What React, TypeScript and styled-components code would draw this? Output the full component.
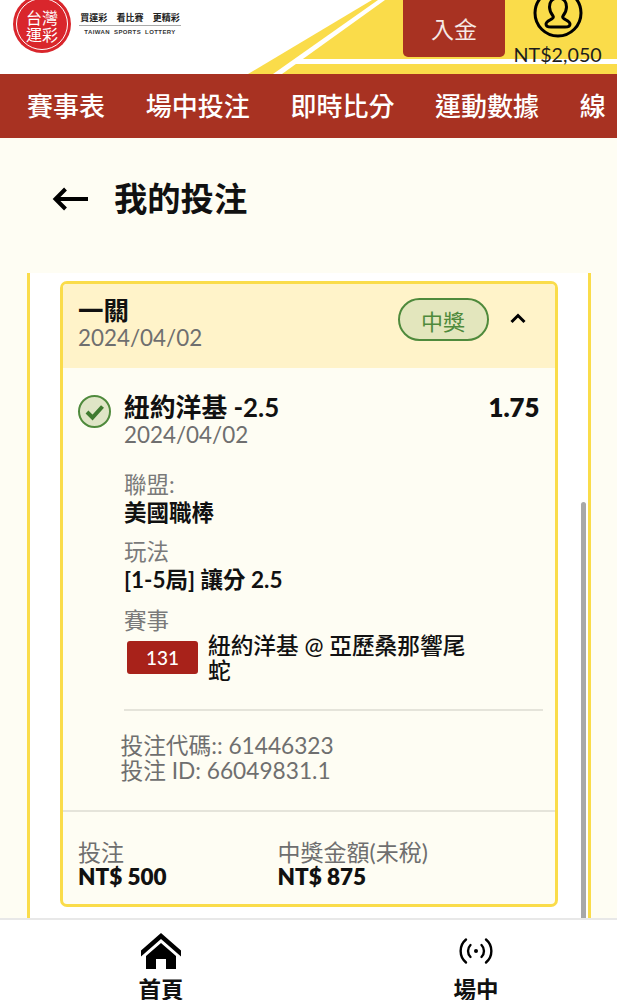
import React from "react";
import styled, { createGlobalStyle } from "styled-components";

const Global = createGlobalStyle`
  html, body { margin: 0; padding: 0; background: #fefdf3; }
  * { box-sizing: border-box; }
`;
const CJK = `Lato, "Noto Sans CJK TC", sans-serif`;

const Page = styled.div`
  width: 617px; height: 1000px; overflow: hidden; display: flex; flex-direction: column;
  background: #fefdf3; font-family: ${CJK}; color: #000;
`;
const Header = styled.header`
  position: relative; height: 74px; flex: none; background: #fff; display: flex; overflow: hidden;
`;
const HeaderArt = styled.svg`
  position: absolute; inset: 0; width: 617px; height: 74px;
`;
const Logo = styled.div`
  position: relative; margin: -5px 0 0 13px; width: 58px; height: 58px; border-radius: 50%; background: #d9262c;
  display: flex; align-items: center; justify-content: center; flex: none;
  &::after { content: ""; position: absolute; inset: 3px; border: 1px solid #fff; border-radius: 50%; }
`;
const LogoText = styled.div`
  color: #fff; font-size: 16px; line-height: 17px; width: 34px; text-align: center; margin-top: 4px;
`;
const Slogan = styled.div`
  margin: 12px 0 0 8px; width: 102px; display: flex; flex-direction: column; align-items: center;
`;
const SloganTop = styled.div`
  font-size: 9px; line-height: 11px; font-weight: 700; white-space: nowrap; color: #222; word-spacing: 7px; padding-bottom: 2px;
  border-bottom: 1px solid #aaa; width: 100%; text-align: center;
`;
const SloganBottom = styled.div`
  font-family: "Liberation Sans", sans-serif; font-size: 6px; line-height: 11px; margin-top: 1px; font-weight: 700; color: #333; letter-spacing: .4px; word-spacing: 2px; white-space: nowrap;
`;
const Deposit = styled.div`
  position: absolute; left: 403px; top: -4px; width: 102px; height: 61px; border-radius: 5px; background: #a83222;
  color: #f5e9e6; font-size: 23px; display: flex; align-items: center; justify-content: center; padding-top: 3px;
`;
const Account = styled.div`
  position: absolute; left: 505px; top: 0; width: 112px; height: 74px; display: flex; flex-direction: column; align-items: flex-start; padding-left: 28px;
`;
const Balance = styled.div`
  position: absolute; top: 43px; left: 8.500px; font-size: 19.700px; line-height: 23px; color: #1c1c1c; white-space: nowrap;
`;
const Nav = styled.nav`
  height: 64px; flex: none; background: #a83222; display: flex; align-items: center; padding-left: 27px; gap: 40.700px; overflow: hidden; white-space: nowrap;
`;
const NavItem = styled.div`
  color: #fff; font-size: 26px; font-weight: 500; line-height: 32px; flex: none;
`;
const TitleRow = styled.div`
  height: 135px; flex: none; display: flex; align-items: center; padding: 0 0 15px 52px; gap: 26px;
`;
const BackArrow = styled.svg`
  width: 36px; height: 26px; margin-top: 2px; flex: none;
`;
const Title = styled.h1`
  margin: 0; font-size: 33.300px; line-height: 40px; font-weight: 700; color: #111;
`;
const Panel = styled.section`
  position: relative; flex: 1; min-height: 0; margin: 0 26px 0 27px; background: #fff;
  border-left: 3px solid #fadc4a; border-right: 3px solid #fadc4a; padding: 8px 0 0 29.5px; overflow: hidden;
`;
const ScrollThumb = styled.div`
  position: absolute; right: 2.500px; top: 229px; bottom: 0; width: 4.500px; background: #a8a8a8; border-radius: 3px 3px 0 0;
`;
const Card = styled.article`
  width: 498px; height: 626px; border: 3px solid #fadc4a; border-radius: 7px; background: #fefdf3; display: flex; flex-direction: column; overflow: hidden;
`;
const CardHead = styled.div`
  height: 84px; flex: none; background: #fff3c9; display: flex; align-items: center; padding: 0 0 4px 15.500px;
`;
const HeadText = styled.div`
  flex: 1; display: flex; flex-direction: column;
`;
const HeadActions = styled.div`
  display: flex; align-items: center; margin: -9px 0 0 0;
`;
const Strong = styled.div<{ $size?: number }>`
  font-size: ${p => p.$size ?? 25.5}px; line-height: 27px; font-weight: 700; color: #111; white-space: nowrap;
`;
const Muted = styled.div`
  font-size: 22.400px; line-height: 27px; color: #6f6f6f; white-space: nowrap;
`;
const Badge = styled.div`
  width: 91px; height: 43px; border: 2px solid #4f8a3c; border-radius: 22px; background: #e3e6bd; color: #4f8a3c;
  font-size: 22px; display: flex; align-items: center; justify-content: center;
`;
const Chevron = styled.svg`
  width: 18px; height: 12px; margin: 0 28px 4px 20px;
`;
const Body = styled.div`
  display: flex; flex-direction: column; flex: 1; padding: 26px 15px 0 15.500px;
`;
const PickRow = styled.div`
  display: flex; align-items: flex-start;
`;
const Check = styled.svg`
  width: 33px; height: 33px; margin: 1px 13px 0 0; flex: none;
`;
const PickText = styled.div`
  flex: 1; display: flex; flex-direction: column;
`;
const Odds = styled(Strong)`
  font-weight: 800;
`;
const Details = styled.div`
  margin-left: 46px; display: flex; flex-direction: column;
`;
const Label = styled.div<{ $top: number }>`
  margin-top: ${p => p.$top}px; font-size: 22.500px; line-height: 26px; color: #7a7a7a;
`;
const Value = styled.div`
  margin-top: 1px; font-size: 22.500px; line-height: 28px; font-weight: 700; color: #111; white-space: nowrap;
`;
const EventRow = styled.div`
  display: flex; align-items: center; margin-top: -1px; gap: 10px; margin-left: 3px;
`;
const EventCode = styled.div`
  width: 71px; height: 33px; margin-top: -2px; background: #a8221a; border-radius: 3px; color: #fff; font-size: 19px; font-weight: 500;
  display: flex; align-items: center; justify-content: center; flex: none;
`;
const EventName = styled.div`
  width: 270px; font-size: 22.700px; line-height: 25px; font-weight: 500; color: #111;
`;
const Rule = styled.hr`
  margin: 26px -3px 0 46px; border: 0; border-top: 2px solid #e5e4da; align-self: stretch;
`;
const Codes = styled.div`
  margin: 22px 0 0 42.500px; font-size: 22.700px; line-height: 25px; color: #6f6f6f; white-space: nowrap;
`;
const Totals = styled.div`
  margin: 27px -15px 0 -15.500px; border-top: 2px solid #e5e4da; padding: 28px 15px 0 15.500px; display: flex;
`;
const TotalCol = styled.div<{ $width: number }>`
  width: ${p => p.$width}px; display: flex; flex-direction: column;
`;
const TotalLabel = styled.div`
  font-size: 23px; line-height: 25px; color: #6f6f6f; white-space: nowrap;
`;
const TotalValue = styled.div`
  font-size: 22.500px; line-height: 24px; font-weight: 800; color: #111; white-space: nowrap;
`;
const Tabs = styled.footer`
  height: 82px; flex: none; background: #fff; border-top: 2px solid #e8e8e8; display: flex; padding: 9px 0 0 3.500px; overflow: hidden;
`;
const Tab = styled.div`
  flex: 0 0 315px; display: flex; flex-direction: column; align-items: center;
`;
const TabIcon = styled.svg`
  width: 44px; height: 44px; flex: none;
`;
const TabLabel = styled.div`
  font-size: 22.500px; line-height: 28px; font-weight: 700; color: #111; margin-top: 3px;
`;

export default function App() {
  return (
    <Page>
      <Global />
      <Header>
        <HeaderArt viewBox="0 0 617 74">
          <polygon points="248,74 372,0 617,0 617,74" fill="#fadc4a" />
          <polygon points="273,74 378,0 385,0 282,74" fill="#fff" />
          <polygon points="301,59 617,59 617,64 293,64" fill="#fff" />
        </HeaderArt>
        <Logo><LogoText>台灣運彩</LogoText></Logo>
        <Slogan>
          <SloganTop>買運彩 看比賽 更精彩</SloganTop>
          <SloganBottom>TAIWAN SPORTS LOTTERY</SloganBottom>
        </Slogan>
        <Deposit>入金</Deposit>
        <Account>
          <svg width="50" height="40" viewBox="0 0 50 40" fill="none" stroke="#000" strokeWidth="3">
            <circle cx="25" cy="13" r="23" />
            <path d="M25 -2c-6 0-8.500 4-8.500 9 0 4 2 7 3.500 9 .6 1 .2 2-1 2.800-2.500 1.500-6 2.700-6 5.200 0 2 2 3 5 3h14c3 0 5-1 5-3 0-2.500-3.500-3.700-6-5.200-1.200-.8-1.600-1.800-1-2.800 1.500-2 3.500-5 3.500-9 0-5-2.500-9-8.500-9z" />
          </svg>
          <Balance>NT$2,050</Balance>
        </Account>
      </Header>
      <Nav>
        <NavItem>賽事表</NavItem>
        <NavItem>場中投注</NavItem>
        <NavItem>即時比分</NavItem>
        <NavItem>運動數據</NavItem>
        <NavItem>線</NavItem>
      </Nav>
      <TitleRow>
        <BackArrow viewBox="0 0 36 26" fill="none" stroke="#000" strokeWidth="4">
          <path d="M36 13H4M13.500 3 3.500 13l10 10" />
        </BackArrow>
        <Title>我的投注</Title>
      </TitleRow>
      <Panel>
        <ScrollThumb />
        <Card>
          <CardHead>
            <HeadText>
              <Strong>一關</Strong>
              <Muted>2024/04/02</Muted>
            </HeadText>
            <HeadActions>
              <Badge>中獎</Badge>
              <Chevron viewBox="0 0 18 12" fill="none" stroke="#000" strokeWidth="3">
                <path d="M2.500 10 9 3.500l6.500 6.500" />
              </Chevron>
            </HeadActions>
          </CardHead>
          <Body>
            <PickRow>
              <Check viewBox="0 0 33 33">
                <circle cx="16.500" cy="16.500" r="15.500" fill="#dfe5c6" stroke="#4f8a3c" strokeWidth="2" />
                <path d="M9 17l5.500 5.500L24.500 11.500" fill="none" stroke="#3f7a30" strokeWidth="4" />
              </Check>
              <PickText>
                <Strong $size={25.8}>紐約洋基 -2.5</Strong>
                <Muted>2024/04/02</Muted>
              </PickText>
              <Odds $size={25.8}>1.75</Odds>
            </PickRow>
            <Details>
              <Label $top={24}>聯盟:</Label>
              <Value>美國職棒</Value>
              <Label $top={12}>玩法</Label>
              <Value>[1-5局] 讓分 2.5</Value>
              <Label $top={14}>賽事</Label>
              <EventRow>
                <EventCode>131</EventCode>
                <EventName>紐約洋基 @ 亞歷桑那響尾蛇</EventName>
              </EventRow>
            </Details>
            <Rule />
            <Codes>
              投注代碼:: 61446323
              <br />
              投注 ID: 66049831.1
            </Codes>
            <Totals>
              <TotalCol $width={199.5}>
                <TotalLabel>投注</TotalLabel>
                <TotalValue>NT$ 500</TotalValue>
              </TotalCol>
              <TotalCol $width={200}>
                <TotalLabel>中獎金額(未稅)</TotalLabel>
                <TotalValue>NT$ 875</TotalValue>
              </TotalCol>
            </Totals>
          </Body>
        </Card>
      </Panel>
      <Tabs>
        <Tab>
          <TabIcon viewBox="0 0 44 44">
            <path d="M22 4 2 21.500v6L22 10 42 27.500v-6z" fill="#000" />
            <path d="M22 14 7 27v13h10V30h10v10h10V27z" fill="#000" />
          </TabIcon>
          <TabLabel>首頁</TabLabel>
        </Tab>
        <Tab>
          <TabIcon viewBox="0 0 44 44" fill="none" stroke="#000" strokeWidth="2.400" strokeLinecap="round">
            <circle cx="22" cy="22" r="2" fill="#000" stroke="none" />
            <path d="M16.500 16a8.500 8.500 0 0 0 0 12M27.500 16a8.500 8.500 0 0 1 0 12" />
            <path d="M12 10.500a15 15 0 0 0 0 23M32 10.500a15 15 0 0 1 0 23" />
          </TabIcon>
          <TabLabel>場中</TabLabel>
        </Tab>
      </Tabs>
    </Page>
  );
}
